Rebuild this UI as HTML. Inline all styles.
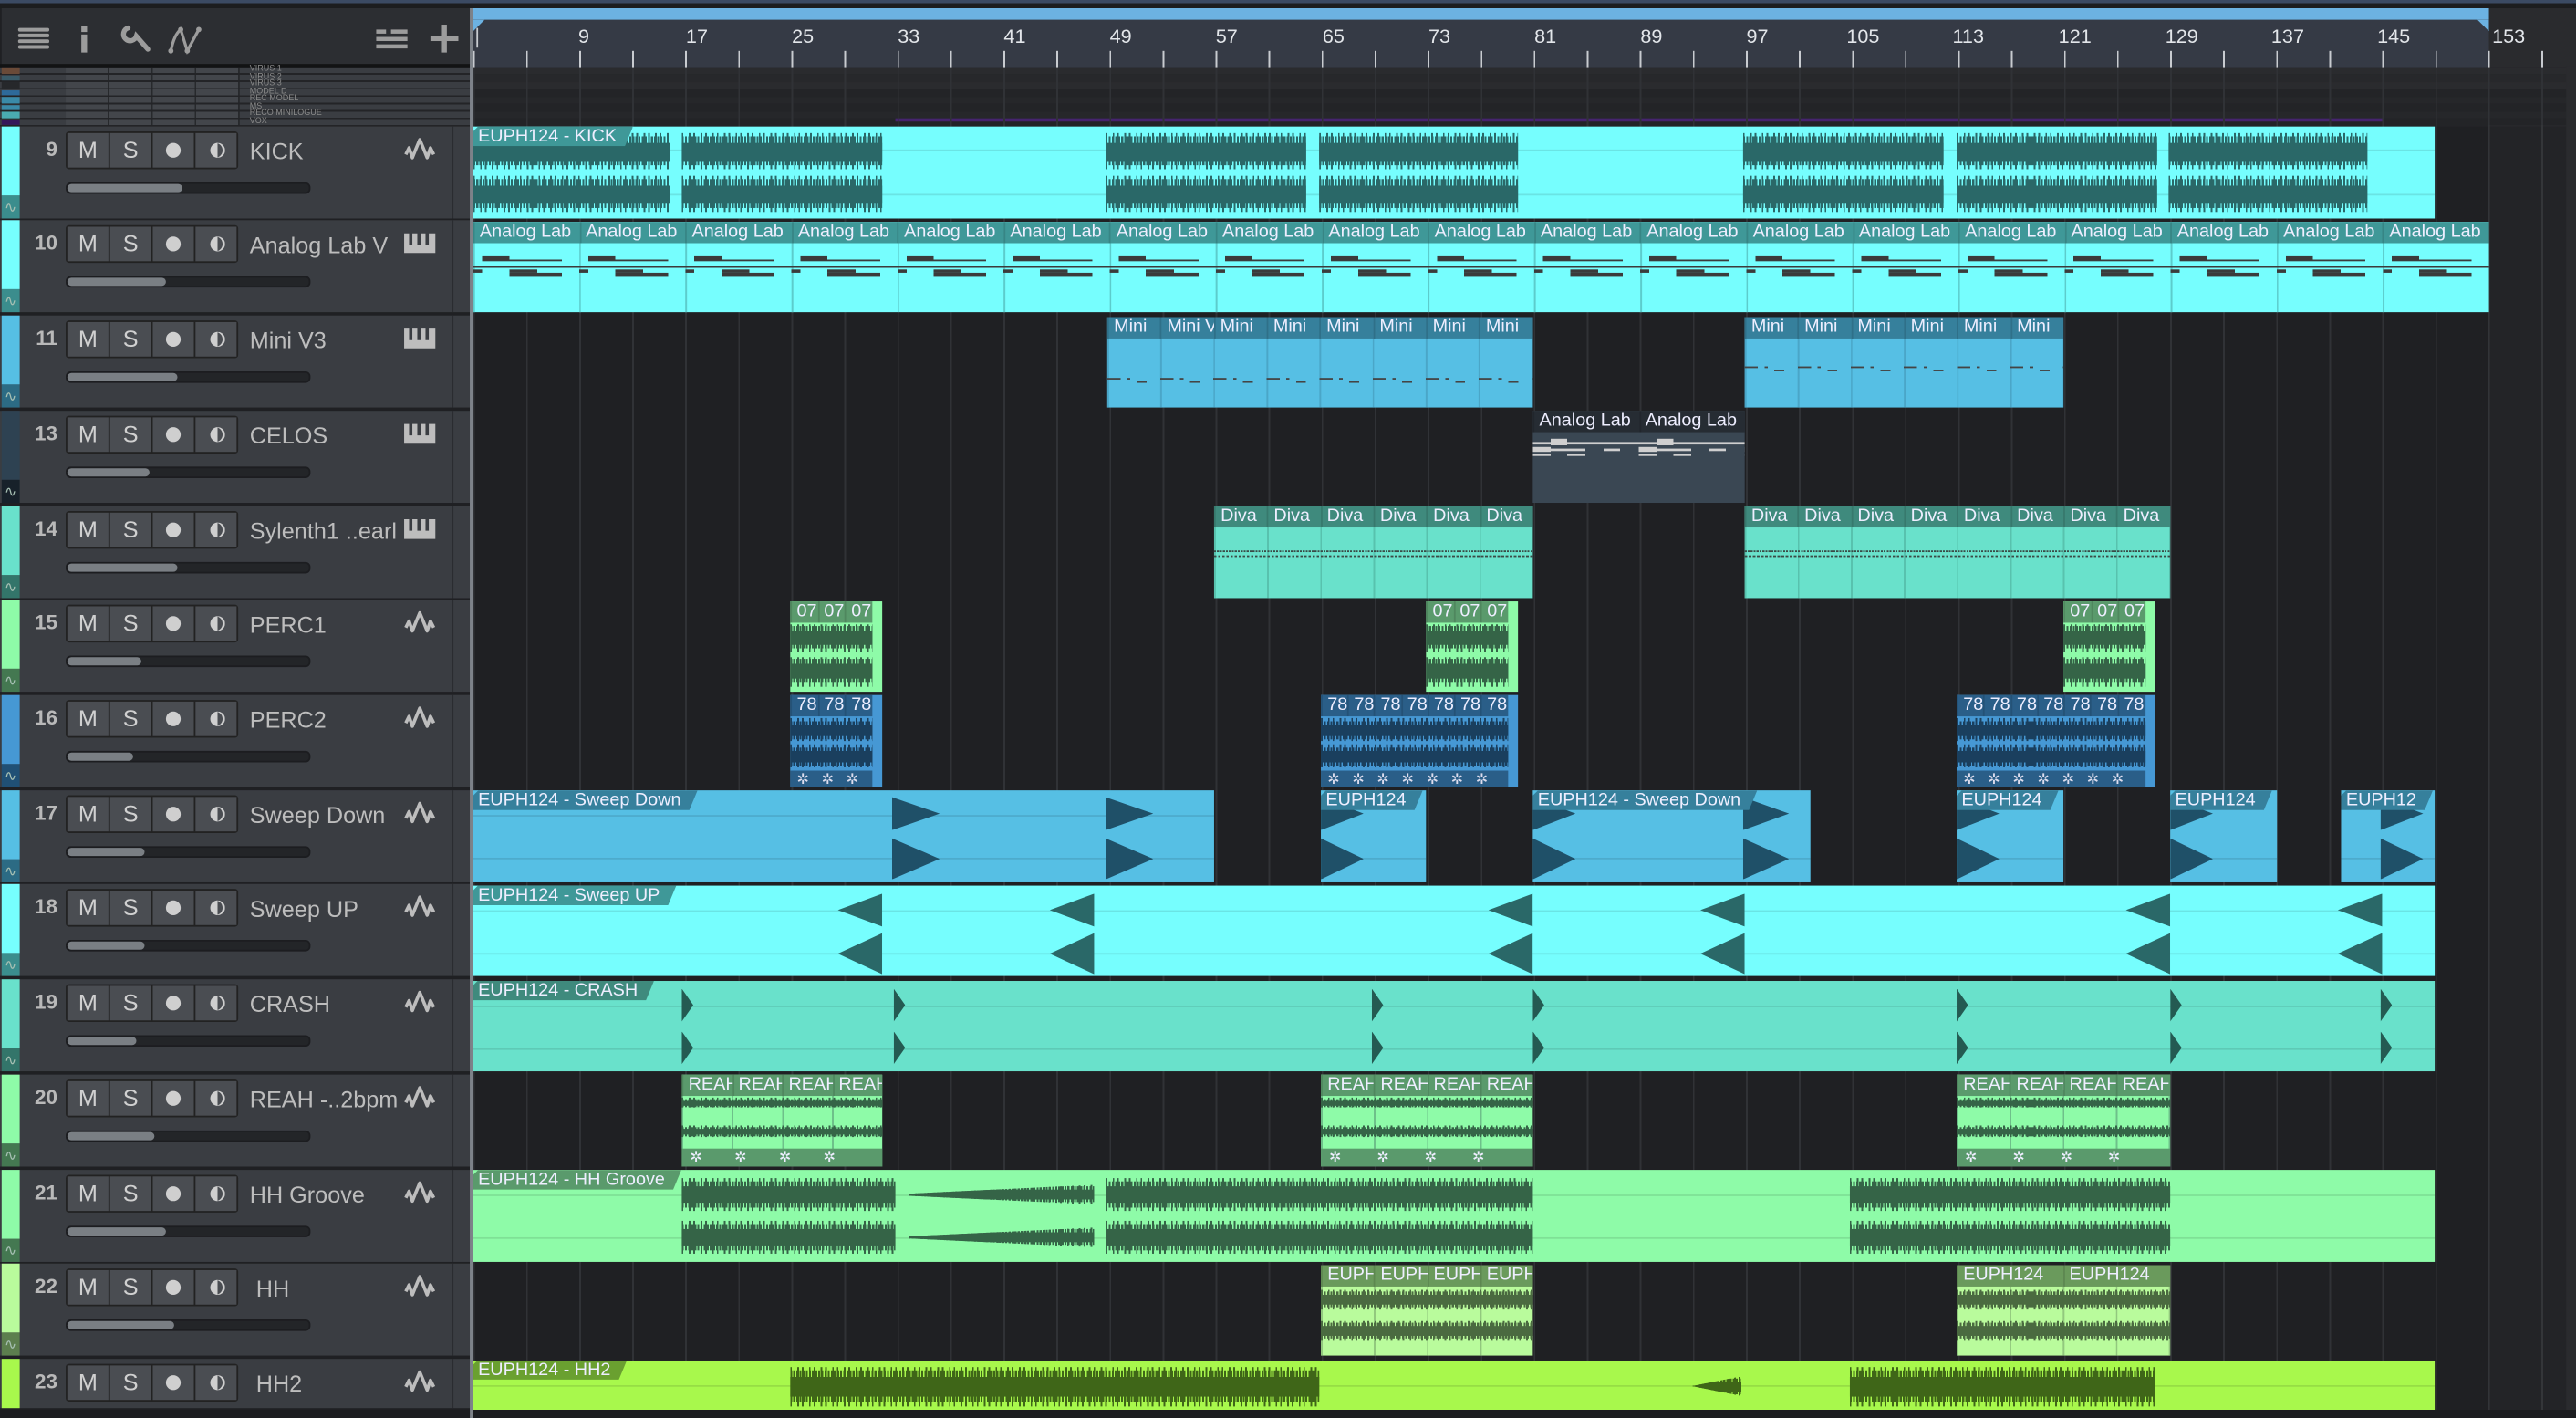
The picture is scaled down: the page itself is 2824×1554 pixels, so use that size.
<!DOCTYPE html>
<html><head><meta charset="utf-8">
<style>
html,body{margin:0;padding:0;width:2824px;height:1554px;overflow:hidden;background:#1f2023;}
#s{position:absolute;left:0;top:0;width:1568px;height:863px;transform:scale(1.80102,1.8007);transform-origin:0 0;background:#1f2023;font-family:"Liberation Sans",sans-serif;overflow:hidden}
.a{position:absolute}
.r{position:absolute;left:0;width:1568px;height:57.74px}
.hd{position:absolute;left:0;top:0;width:286px;height:56px;background:#3a3d42}
.dv{position:absolute;left:275px;top:0;width:1px;height:56px;background:#2a2c30}
.st{position:absolute;left:1px;top:0;width:11px;height:42px}
.au{position:absolute;left:1px;top:42px;width:11px;height:14px;color:#dfe;font-size:9px;line-height:14px;text-align:center;filter:brightness(.75)}
.num{position:absolute;left:12px;width:23px;top:7px;text-align:right;font-weight:bold;color:#b9b9b9;font-size:12.5px}
.bt{position:absolute;left:40px;top:3px;width:105px;height:23px;background:#222;border-radius:2px;display:flex;gap:1px;padding:1px;box-sizing:border-box}
.bt b{flex:1;background:#4a4d52;color:#d0d0d0;font-weight:normal;font-size:14px;text-align:center;line-height:21px;position:relative}
.dot{display:block;width:9px;height:9px;border-radius:50%;background:#cfcfcf;position:absolute;left:8px;top:6px}
.mon{display:block;position:absolute;left:8.5px;top:6px;width:9px;height:9px;border-radius:50%;background:linear-gradient(90deg,#cfcfcf 0 50%,transparent 50%);box-shadow:inset -1.5px 0 0 #cfcfcf}
.nm{position:absolute;left:152px;top:7px;color:#bdbdbd;font-size:14px;white-space:nowrap}
.ic{position:absolute;left:246px;top:8px;width:19px;height:12px;overflow:visible}
.fd{position:absolute;left:40px;top:34px;width:147px;height:5px;border-radius:3px;background:#232528;border:1px solid #1c1d20}
.fd i{display:block;height:5px;border-radius:3px;background:#7a7f84}
.c{position:absolute;top:0.5px;height:55.5px;overflow:hidden}
.lb{position:absolute;left:0;top:0;height:12px;color:#eef;font-size:11px;line-height:12px;padding-left:3px;padding-right:10px;white-space:nowrap;clip-path:polygon(3px 0,100% 0,calc(100% - 5px) 100%,0 100%,0 3px)}
.hb{position:absolute;left:0;top:0;right:0;height:13px;display:flex;overflow:hidden}
.hb span{flex:none;height:13px;color:#eef;font-size:11px;line-height:13px;padding-left:3px;box-sizing:border-box;overflow:hidden;white-space:nowrap;border-left:1px solid rgba(0,0,0,.12)}
.wv{position:absolute;background:
 linear-gradient(var(--w),var(--w)) 0 50%/100% 50% no-repeat,
 repeating-linear-gradient(90deg,var(--w) 0 1.2px,transparent 1.2px 1.9px) 0 50%/100% 80% no-repeat,
 repeating-linear-gradient(90deg,var(--w) 0 1px,transparent 1px 4.3px,var(--w) 4.3px 5.3px,transparent 5.3px 7.1px)}
.cl{position:absolute;left:0;right:0;height:1px;background:rgba(0,0,0,.1)}
.tri{position:absolute;background:var(--w)}
.cy{background:#76fefe;--w:#2a6868}.cyh{background:#3f9898}
.bl{background:#56bfe4;--w:#1f5068}.blh{background:#36809c}
.te{background:#69e1cb;--w:#245a52}.teh{background:#3f8a7d}
.gr{background:#8efba8;--w:#356447}.grh{background:#5a9a6c}
.pb{background:#4698d4;--w:#1a3f5e}.pbh{background:#2a5e88}
.lg{background:#b9fb9c;--w:#4a6a40}.lgh{background:#6a9a5c}
.li{background:#a8f84c;--w:#3f6618}.lih{background:#6aa030}
.mr{position:absolute;left:0;width:1568px;height:4.5px}
.tk{position:absolute;top:15px;color:#e3e6ea;font-size:12px}
</style></head><body><div id="s">

<div class="a" style="left:0;top:0;width:1568px;height:2px;background:#3b4a63"></div>
<div class="a" style="left:0;top:2px;width:1568px;height:3px;background:#1c1d1f"></div>
<div class="a" style="left:1px;top:5px;width:285px;height:34px;background:#2c2e32"></div>
<div class="a" style="left:0;top:39px;width:287px;height:2px;background:#121314"></div>
<svg class="a" style="left:0;top:5px" width="286" height="34" viewBox="0 0 286 34">
 <g fill="#9c9c9c">
  <rect x="11" y="12" width="19" height="2.2" rx="1"/><rect x="11" y="15.5" width="19" height="2.2" rx="1"/><rect x="11" y="19" width="19" height="2.2" rx="1"/><rect x="11" y="22.5" width="19" height="2.2" rx="1"/>
  <rect x="49.5" y="11" width="3.5" height="3.5"/><rect x="49.5" y="16" width="3.5" height="11"/>
  <rect x="238" y="13" width="10" height="2.5"/><rect x="229" y="17.5" width="19" height="2.5"/><rect x="229" y="22" width="19" height="2.5"/><rect x="229" y="13" width="6" height="2.5"/>
  <rect x="262" y="17" width="17" height="3"/><rect x="269" y="10" width="3" height="17"/>
 </g>
 <path d="M78 12 a4 4 0 1 0 5 5 L90 25" stroke="#9c9c9c" stroke-width="3" fill="none" stroke-linecap="round"/>
 <path d="M104 26 Q106 16 110 13 L114 26 L121 13" stroke="#9c9c9c" stroke-width="1.8" fill="none"/>
 <circle cx="104" cy="26" r="1.6" fill="#9c9c9c"/><circle cx="110" cy="13" r="1.6" fill="#9c9c9c"/><circle cx="114" cy="26" r="1.6" fill="#9c9c9c"/><circle cx="121" cy="13" r="1.6" fill="#9c9c9c"/>
</svg>
<div class="a" style="left:287px;top:5px;width:1281px;height:36px;background:#2a2b2e"></div>
<div class="a" style="left:288px;top:5px;width:1227px;height:36px;background:#353a45"></div>
<div class="a" style="left:288px;top:5px;width:1227px;height:7px;background:#6cb2e2"></div>
<div class="a" style="left:288px;top:12px;width:7px;height:7px;background:#6cb2e2;clip-path:polygon(0 0,100% 0,0 100%)"></div>
<div class="a" style="left:1508px;top:12px;width:7px;height:7px;background:#6cb2e2;clip-path:polygon(0 0,100% 0,100% 100%)"></div>
<div class="a" style="left:288px;top:31px;width:1293px;height:9.5px;background:repeating-linear-gradient(90deg,#c8cbd0 0 1px,transparent 1px 32.28px)"></div>
<div class="a" style="left:290px;top:17px;width:1px;height:12px;background:#c8cbd0"></div>
<div class="tk" style="left:352px">9</div><div class="tk" style="left:417.5px">17</div><div class="tk" style="left:482px">25</div><div class="tk" style="left:546.5px">33</div><div class="tk" style="left:611px">41</div><div class="tk" style="left:675.5px">49</div><div class="tk" style="left:740px">57</div><div class="tk" style="left:805px">65</div><div class="tk" style="left:869.5px">73</div><div class="tk" style="left:934px">81</div><div class="tk" style="left:998.5px">89</div><div class="tk" style="left:1063px">97</div><div class="tk" style="left:1124px">105</div><div class="tk" style="left:1188.5px">113</div><div class="tk" style="left:1253px">121</div><div class="tk" style="left:1318px">129</div><div class="tk" style="left:1382.5px">137</div><div class="tk" style="left:1447px">145</div><div class="tk" style="left:1517px">153</div>

<div class="a" style="left:0;top:40.5px;width:1568px;height:36px;background:#242528"></div>
<div class="mr" style="top:40.5px;background:#2a2b2e"></div><div class="mr" style="top:45px;background:#27282b"></div><div class="mr" style="top:49.5px;background:#2a2b2e"></div><div class="mr" style="top:54px;background:#232427"></div><div class="mr" style="top:58.5px;background:#26272a"></div><div class="mr" style="top:63px;background:#232427"></div><div class="mr" style="top:67.5px;background:#26272a"></div><div class="mr" style="top:72px;background:#232427"></div>
<div class="a" style="left:0;top:40.5px;width:286px;height:36px;background:repeating-linear-gradient(180deg,#3a3d42 0 3.5px,#232427 3.5px 4.5px)"></div>
<div class="a" style="left:40px;top:40.5px;width:106px;height:36px;background:repeating-linear-gradient(90deg,#45484d 0 25.5px,#25272a 25.5px 26.5px);opacity:.9;-webkit-mask:repeating-linear-gradient(180deg,#000 0 3.5px,transparent 3.5px 4.5px)"></div>
<div class="a" style="left:1px;top:41px;width:11px;height:3.5px;background:#6a4a38"></div><div class="a" style="left:1px;top:45.5px;width:11px;height:3.5px;background:#3a5a68"></div><div class="a" style="left:1px;top:50px;width:11px;height:3.5px;background:#26282b"></div><div class="a" style="left:1px;top:54.5px;width:11px;height:3.5px;background:#2e6a9a"></div><div class="a" style="left:1px;top:59px;width:11px;height:3.5px;background:#3a8aa8"></div><div class="a" style="left:1px;top:63.5px;width:11px;height:3.5px;background:#3a8aa8"></div><div class="a" style="left:1px;top:68px;width:11px;height:3.5px;background:#4aabb0"></div><div class="a" style="left:1px;top:72.5px;width:11px;height:3.5px;background:#35185a"></div>
<div class="a" style="left:152px;top:40px;color:#8a8a8a;font-size:5px;line-height:4.5px">VIRUS 1<br>VIRUS 2<br>VIRUS 3<br>MODEL D<br>REC MODEL<br>MS<br>RECO MINILOGUE<br>VOX</div>
<div class="a" style="left:545px;top:71.5px;width:906px;height:2.5px;background:#45246e"></div>

<div class="a" style="left:288px;top:40.5px;width:1275px;height:823px;background:repeating-linear-gradient(90deg,#303236 0 1px,transparent 1px 32.28px)"></div>
<div class="a" style="left:1515px;top:76px;width:48px;height:787px;background:rgba(255,255,255,.02)"></div>
<div class="a" style="left:1562px;top:40px;width:6px;height:823px;background:#2a2b2e"></div>
<div class="a" style="left:286px;top:5px;width:2px;height:858px;background:#7d8289"></div>

<!-- ROW 9 KICK -->
<div class="r" style="top:76.5px">
 <div class="hd"></div><div class="dv"></div>
 <div class="st" style="background:#76fefe"></div><div class="au" style="background:#4fbcbc">∿</div>
 <div class="num">9</div>
 <div class="bt"><b>M</b><b>S</b><b><i class="dot"></i></b><b><i class="mon"></i></b></div>
 <div class="nm">KICK</div><svg class="ic" viewBox="0 0 19 12"><path d="M1 9 L3 5 L5 11 L7 6 L9.5 0 L12 6 L14 11 L16 5 L18 9" stroke="#bdbdbd" stroke-width="2" fill="none" stroke-linejoin="round"/></svg>
 <div class="fd"><i style="width:70px"></i></div>
 <div class="c cy" style="left:288px;width:1194px">
  <div class="cl" style="top:14px"></div><div class="cl" style="top:41px"></div>
  <div class="wv" style="left:0;width:120px;top:4px;height:22px"></div><div class="wv" style="left:0;width:120px;top:30px;height:22px"></div>
  <div class="wv" style="left:127px;width:122px;top:4px;height:22px"></div><div class="wv" style="left:127px;width:122px;top:30px;height:22px"></div>
  <div class="wv" style="left:385px;width:122px;top:4px;height:22px"></div><div class="wv" style="left:385px;width:122px;top:30px;height:22px"></div>
  <div class="wv" style="left:515px;width:121px;top:4px;height:22px"></div><div class="wv" style="left:515px;width:121px;top:30px;height:22px"></div>
  <div class="wv" style="left:773px;width:122px;top:4px;height:22px"></div><div class="wv" style="left:773px;width:122px;top:30px;height:22px"></div>
  <div class="wv" style="left:903px;width:122px;top:4px;height:22px"></div><div class="wv" style="left:903px;width:122px;top:30px;height:22px"></div>
  <div class="wv" style="left:1032px;width:121px;top:4px;height:22px"></div><div class="wv" style="left:1032px;width:121px;top:30px;height:22px"></div>
  <div class="lb cyh">EUPH124 - KICK</div>
 </div>
</div>

<!-- ROW 10 -->
<div class="r" style="top:134.2px">
 <div class="hd"></div><div class="dv"></div>
 <div class="st" style="background:#76fefe"></div><div class="au" style="background:#4fbcbc">∿</div>
 <div class="num">10</div>
 <div class="bt"><b>M</b><b>S</b><b><i class="dot"></i></b><b><i class="mon"></i></b></div>
 <div class="nm">Analog Lab V</div><svg class="ic" viewBox="0 0 19 12"><path d="M0 0 H3 V7 H5 V0 H8 V7 H10 V0 H13 V7 H15 V0 H19 V12 H0Z" fill="#bdbdbd"/></svg>
 <div class="fd"><i style="width:60px"></i></div>
 <div class="c cy" style="left:288px;width:1227px;background:repeating-linear-gradient(90deg,#5ccccc 0 1px,transparent 1px 64.58px),#76fefe">
  <div class="a" style="left:0;right:0;top:21px;height:14px;background:
   repeating-linear-gradient(90deg,transparent 0 5.5px,#3b3b3b 5.5px 22px,transparent 22px 64.58px) 0 0/100% 3px no-repeat,
   repeating-linear-gradient(90deg,transparent 0 22px,#3b3b3b 22px 54px,transparent 54px 64.58px) 0 2.5px/100% 1px no-repeat,
   linear-gradient(#3b3b3b,#3b3b3b) 0 6px/100% 1px no-repeat,
   repeating-linear-gradient(90deg,#3b3b3b 0 5.5px,transparent 5.5px 22px,#3b3b3b 22px 39px,transparent 39px 64.58px) 0 8px/100% 2px no-repeat,
   repeating-linear-gradient(90deg,transparent 0 22px,#3b3b3b 22px 54px,transparent 54px 64.58px) 0 10px/100% 2.5px no-repeat"></div>
  <div class="hb cyh"><span style="width:64.58px">Analog Lab</span><span style="width:64.58px">Analog Lab</span><span style="width:64.58px">Analog Lab</span><span style="width:64.58px">Analog Lab</span><span style="width:64.58px">Analog Lab</span><span style="width:64.58px">Analog Lab</span><span style="width:64.58px">Analog Lab</span><span style="width:64.58px">Analog Lab</span><span style="width:64.58px">Analog Lab</span><span style="width:64.58px">Analog Lab</span><span style="width:64.58px">Analog Lab</span><span style="width:64.58px">Analog Lab</span><span style="width:64.58px">Analog Lab</span><span style="width:64.58px">Analog Lab</span><span style="width:64.58px">Analog Lab</span><span style="width:64.58px">Analog Lab</span><span style="width:64.58px">Analog Lab</span><span style="width:64.58px">Analog Lab</span><span style="width:64.58px">Analog Lab</span></div>
 </div>
</div>

<!-- ROW 11 -->
<div class="r" style="top:192px">
 <div class="hd"></div><div class="dv"></div>
 <div class="st" style="background:#56bfe4"></div><div class="au" style="background:#3a8fb0">∿</div>
 <div class="num">11</div>
 <div class="bt"><b>M</b><b>S</b><b><i class="dot"></i></b><b><i class="mon"></i></b></div>
 <div class="nm">Mini V3</div><svg class="ic" viewBox="0 0 19 12"><path d="M0 0 H3 V7 H5 V0 H8 V7 H10 V0 H13 V7 H15 V0 H19 V12 H0Z" fill="#bdbdbd"/></svg>
 <div class="fd"><i style="width:67px"></i></div>
 <div class="c bl" style="left:674px;width:259px;background:repeating-linear-gradient(90deg,#4aa6c8 0 1px,transparent 1px 32.3px),#56bfe4">
  <div class="a" style="left:0;right:0;top:37px;height:3px;background:repeating-linear-gradient(90deg,#444 0 8px,transparent 8px 12px,#444 12px 14px,transparent 14px 32.3px) 0 0/100% 1px no-repeat,repeating-linear-gradient(90deg,transparent 0 18px,#444 18px 24px,transparent 24px 32.3px) 0 2px/100% 1px no-repeat"></div>
  <div class="hb blh"><span style="width:32.35px">Mini</span><span style="width:32.35px">Mini V</span><span style="width:32.35px">Mini</span><span style="width:32.35px">Mini</span><span style="width:32.35px">Mini</span><span style="width:32.35px">Mini</span><span style="width:32.35px">Mini</span><span style="width:32.35px">Mini</span></div>
 </div>
 <div class="c bl" style="left:1062px;width:194px;background:repeating-linear-gradient(90deg,#4aa6c8 0 1px,transparent 1px 32.3px),#56bfe4">
  <div class="a" style="left:0;right:0;top:30px;height:3px;background:repeating-linear-gradient(90deg,#444 0 8px,transparent 8px 12px,#444 12px 14px,transparent 14px 32.3px) 0 0/100% 1px no-repeat,repeating-linear-gradient(90deg,transparent 0 18px,#444 18px 24px,transparent 24px 32.3px) 0 2px/100% 1px no-repeat"></div>
  <div class="hb blh"><span style="width:32.35px">Mini</span><span style="width:32.35px">Mini</span><span style="width:32.35px">Mini</span><span style="width:32.35px">Mini</span><span style="width:32.35px">Mini</span><span style="width:32.35px">Mini</span></div>
 </div>
</div>

<!-- ROW 13 -->
<div class="r" style="top:249.7px">
 <div class="hd"></div><div class="dv"></div>
 <div class="st" style="background:#2e4252"></div><div class="au" style="background:#1e2c38">∿</div>
 <div class="num">13</div>
 <div class="bt"><b>M</b><b>S</b><b><i class="dot"></i></b><b><i class="mon"></i></b></div>
 <div class="nm">CELOS</div><svg class="ic" viewBox="0 0 19 12"><path d="M0 0 H3 V7 H5 V0 H8 V7 H10 V0 H13 V7 H15 V0 H19 V12 H0Z" fill="#bdbdbd"/></svg>
 <div class="fd"><i style="width:50px"></i></div>
 <div class="c" style="left:933px;width:129px;background:#3a4753">
  <div class="a" style="left:0;right:0;top:17px;height:12px;background:
   repeating-linear-gradient(90deg,transparent 0 11px,#cfcfcf 11px 21px,transparent 21px 64.5px) 0 0/100% 4px no-repeat,
   linear-gradient(#cfcfcf,#cfcfcf) 0 2px/100% 1.5px no-repeat,
   repeating-linear-gradient(90deg,#cfcfcf 0 11px,transparent 11px 64.5px) 0 5px/100% 3px no-repeat,
   repeating-linear-gradient(90deg,transparent 0 11px,#cfcfcf 11px 32px,transparent 32px 43px,#cfcfcf 43px 53px,transparent 53px 64.5px) 0 6px/100% 1.5px no-repeat,
   repeating-linear-gradient(90deg,#cfcfcf 0 11px,transparent 11px 21px,#cfcfcf 21px 32px,transparent 32px 64.5px) 0 9px/100% 1.5px no-repeat"></div>
  <div class="hb" style="background:#262c33"><span style="width:64.5px">Analog Lab</span><span style="width:64.5px">Analog Lab</span></div>
 </div>
</div>

<!-- ROW 14 -->
<div class="r" style="top:307.5px">
 <div class="hd"></div><div class="dv"></div>
 <div class="st" style="background:#69e1cb"></div><div class="au" style="background:#449c8e">∿</div>
 <div class="num">14</div>
 <div class="bt"><b>M</b><b>S</b><b><i class="dot"></i></b><b><i class="mon"></i></b></div>
 <div class="nm">Sylenth1 ..earl</div><svg class="ic" viewBox="0 0 19 12"><path d="M0 0 H3 V7 H5 V0 H8 V7 H10 V0 H13 V7 H15 V0 H19 V12 H0Z" fill="#bdbdbd"/></svg>
 <div class="fd"><i style="width:67px"></i></div>
 <div class="c te" style="left:739px;width:194px;background:repeating-linear-gradient(90deg,#58c2ae 0 1px,transparent 1px 32.3px),#69e1cb">
  <div class="a" style="left:0;right:0;top:27px;height:4px;background:repeating-linear-gradient(90deg,#3a4a46 0 1.2px,transparent 1.2px 1.8px) 0 0/100% 1.2px no-repeat,repeating-linear-gradient(90deg,#3a4a46 0 1.5px,transparent 1.5px 2.5px) 0 3px/100% 1px no-repeat"></div>
  <div class="hb teh"><span style="width:32.35px">Diva</span><span style="width:32.35px">Diva</span><span style="width:32.35px">Diva</span><span style="width:32.35px">Diva</span><span style="width:32.35px">Diva</span><span style="width:32.35px">Diva</span></div>
 </div>
 <div class="c te" style="left:1062px;width:259px;background:repeating-linear-gradient(90deg,#58c2ae 0 1px,transparent 1px 32.3px),#69e1cb">
  <div class="a" style="left:0;right:0;top:27px;height:4px;background:repeating-linear-gradient(90deg,#3a4a46 0 1.2px,transparent 1.2px 1.8px) 0 0/100% 1.2px no-repeat,repeating-linear-gradient(90deg,#3a4a46 0 1.5px,transparent 1.5px 2.5px) 0 3px/100% 1px no-repeat"></div>
  <div class="hb teh"><span style="width:32.35px">Diva</span><span style="width:32.35px">Diva</span><span style="width:32.35px">Diva</span><span style="width:32.35px">Diva</span><span style="width:32.35px">Diva</span><span style="width:32.35px">Diva</span><span style="width:32.35px">Diva</span><span style="width:32.35px">Diva</span></div>
 </div>
</div>

<!-- ROW 15 -->
<div class="r" style="top:365.2px">
 <div class="hd"></div><div class="dv"></div>
 <div class="st" style="background:#8efba8"></div><div class="au" style="background:#5aa06c">∿</div>
 <div class="num">15</div>
 <div class="bt"><b>M</b><b>S</b><b><i class="dot"></i></b><b><i class="mon"></i></b></div>
 <div class="nm">PERC1</div><svg class="ic" viewBox="0 0 19 12"><path d="M1 9 L3 5 L5 11 L7 6 L9.5 0 L12 6 L14 11 L16 5 L18 9" stroke="#bdbdbd" stroke-width="2" fill="none" stroke-linejoin="round"/></svg>
 <div class="fd"><i style="width:45px"></i></div>
 <div class="c gr" style="left:481px;width:56px"><div class="wv" style="left:0;width:50px;top:14px;height:17px"></div><div class="wv" style="left:0;width:50px;top:34px;height:18px"></div><div class="hb grh" style="right:6px"><span style="width:16.6px">07</span><span style="width:16.6px">07</span><span style="width:16.6px">07</span></div></div>
 <div class="c gr" style="left:868px;width:56px"><div class="wv" style="left:0;width:50px;top:14px;height:17px"></div><div class="wv" style="left:0;width:50px;top:34px;height:18px"></div><div class="hb grh" style="right:6px"><span style="width:16.6px">07</span><span style="width:16.6px">07</span><span style="width:16.6px">07</span></div></div>
 <div class="c gr" style="left:1256px;width:56px"><div class="wv" style="left:0;width:50px;top:14px;height:17px"></div><div class="wv" style="left:0;width:50px;top:34px;height:18px"></div><div class="hb grh" style="right:6px"><span style="width:16.6px">07</span><span style="width:16.6px">07</span><span style="width:16.6px">07</span></div></div>
</div>

<!-- ROW 16 -->
<div class="r" style="top:422.9px">
 <div class="hd"></div><div class="dv"></div>
 <div class="st" style="background:#4698d4"></div><div class="au" style="background:#2a6a9c">∿</div>
 <div class="num">16</div>
 <div class="bt"><b>M</b><b>S</b><b><i class="dot"></i></b><b><i class="mon"></i></b></div>
 <div class="nm">PERC2</div><svg class="ic" viewBox="0 0 19 12"><path d="M1 9 L3 5 L5 11 L7 6 L9.5 0 L12 6 L14 11 L16 5 L18 9" stroke="#bdbdbd" stroke-width="2" fill="none" stroke-linejoin="round"/></svg>
 <div class="fd"><i style="width:40px"></i></div>
 <div class="c pb" style="left:481px;width:56px"><div class="wv" style="left:0;width:50px;top:14px;height:14px"></div><div class="wv" style="left:0;width:50px;top:30px;height:14px"></div><div class="hb pbh" style="right:6px"><span style="width:16.6px">78</span><span style="width:16.6px">78</span><span style="width:16.6px">78</span></div><div class="a pbh" style="left:0;right:6px;bottom:0;height:10px;color:#dde;font-size:9px;line-height:10px;word-spacing:5px;padding-left:4px">✲ ✲ ✲</div></div>
 <div class="c pb" style="left:804px;width:120px"><div class="wv" style="left:0;width:114px;top:14px;height:14px"></div><div class="wv" style="left:0;width:114px;top:30px;height:14px"></div><div class="hb pbh" style="right:6px"><span style="width:16.2px">78</span><span style="width:16.2px">78</span><span style="width:16.2px">78</span><span style="width:16.2px">78</span><span style="width:16.2px">78</span><span style="width:16.2px">78</span><span style="width:16.2px">78</span></div><div class="a pbh" style="left:0;right:6px;bottom:0;height:10px;color:#dde;font-size:9px;line-height:10px;word-spacing:5px;padding-left:4px">✲ ✲ ✲ ✲ ✲ ✲ ✲</div></div>
 <div class="c pb" style="left:1191px;width:121px"><div class="wv" style="left:0;width:115px;top:14px;height:14px"></div><div class="wv" style="left:0;width:115px;top:30px;height:14px"></div><div class="hb pbh" style="right:6px"><span style="width:16.3px">78</span><span style="width:16.3px">78</span><span style="width:16.3px">78</span><span style="width:16.3px">78</span><span style="width:16.3px">78</span><span style="width:16.3px">78</span><span style="width:16.3px">78</span></div><div class="a pbh" style="left:0;right:6px;bottom:0;height:10px;color:#dde;font-size:9px;line-height:10px;word-spacing:5px;padding-left:4px">✲ ✲ ✲ ✲ ✲ ✲ ✲</div></div>
</div>

<!-- ROW 17 -->
<div class="r" style="top:480.7px">
 <div class="hd"></div><div class="dv"></div>
 <div class="st" style="background:#56bfe4"></div><div class="au" style="background:#3a8fb0">∿</div>
 <div class="num">17</div>
 <div class="bt"><b>M</b><b>S</b><b><i class="dot"></i></b><b><i class="mon"></i></b></div>
 <div class="nm">Sweep Down</div><svg class="ic" viewBox="0 0 19 12"><path d="M1 9 L3 5 L5 11 L7 6 L9.5 0 L12 6 L14 11 L16 5 L18 9" stroke="#bdbdbd" stroke-width="2" fill="none" stroke-linejoin="round"/></svg>
 <div class="fd"><i style="width:47px"></i></div>
 <div class="c bl" style="left:288px;width:451px"><div class="cl" style="top:15px"></div><div class="cl" style="top:41px"></div>
  <div class="tri" style="left:255px;top:4px;width:29px;height:20px;clip-path:polygon(0 0,100% 50%,0 100%)"></div><div class="tri" style="left:255px;top:29px;width:29px;height:25px;clip-path:polygon(0 0,100% 50%,0 100%)"></div>
  <div class="tri" style="left:385px;top:4px;width:29px;height:20px;clip-path:polygon(0 0,100% 50%,0 100%)"></div><div class="tri" style="left:385px;top:29px;width:29px;height:25px;clip-path:polygon(0 0,100% 50%,0 100%)"></div>
  <div class="lb blh">EUPH124 - Sweep Down</div></div>
 <div class="c bl" style="left:804px;width:64px"><div class="cl" style="top:41px"></div>
  <div class="tri" style="left:0;top:4px;width:26px;height:20px;clip-path:polygon(0 0,100% 50%,0 100%)"></div><div class="tri" style="left:0;top:29px;width:26px;height:25px;clip-path:polygon(0 0,100% 50%,0 100%)"></div>
  <div class="lb blh">EUPH124</div></div>
 <div class="c bl" style="left:933px;width:169px"><div class="cl" style="top:41px"></div>
  <div class="tri" style="left:0;top:4px;width:26px;height:20px;clip-path:polygon(0 0,100% 50%,0 100%)"></div><div class="tri" style="left:0;top:29px;width:26px;height:25px;clip-path:polygon(0 0,100% 50%,0 100%)"></div>
  <div class="tri" style="left:128px;top:4px;width:28px;height:20px;clip-path:polygon(0 0,100% 50%,0 100%)"></div><div class="tri" style="left:128px;top:29px;width:28px;height:25px;clip-path:polygon(0 0,100% 50%,0 100%)"></div>
  <div class="lb blh">EUPH124 - Sweep Down</div></div>
 <div class="c bl" style="left:1191px;width:65px"><div class="cl" style="top:41px"></div>
  <div class="tri" style="left:0;top:4px;width:26px;height:20px;clip-path:polygon(0 0,100% 50%,0 100%)"></div><div class="tri" style="left:0;top:29px;width:26px;height:25px;clip-path:polygon(0 0,100% 50%,0 100%)"></div>
  <div class="lb blh">EUPH124</div></div>
 <div class="c bl" style="left:1321px;width:65px"><div class="cl" style="top:41px"></div>
  <div class="tri" style="left:0;top:4px;width:26px;height:20px;clip-path:polygon(0 0,100% 50%,0 100%)"></div><div class="tri" style="left:0;top:29px;width:26px;height:25px;clip-path:polygon(0 0,100% 50%,0 100%)"></div>
  <div class="lb blh">EUPH124</div></div>
 <div class="c bl" style="left:1425px;width:57px"><div class="cl" style="top:41px"></div>
  <div class="tri" style="left:24px;top:4px;width:26px;height:20px;clip-path:polygon(0 0,100% 50%,0 100%)"></div><div class="tri" style="left:24px;top:29px;width:26px;height:25px;clip-path:polygon(0 0,100% 50%,0 100%)"></div>
  <div class="lb blh">EUPH12</div></div>
</div>

<!-- ROW 18 -->
<div class="r" style="top:538.4px">
 <div class="hd"></div><div class="dv"></div>
 <div class="st" style="background:#76fefe"></div><div class="au" style="background:#4fbcbc">∿</div>
 <div class="num">18</div>
 <div class="bt"><b>M</b><b>S</b><b><i class="dot"></i></b><b><i class="mon"></i></b></div>
 <div class="nm">Sweep UP</div><svg class="ic" viewBox="0 0 19 12"><path d="M1 9 L3 5 L5 11 L7 6 L9.5 0 L12 6 L14 11 L16 5 L18 9" stroke="#bdbdbd" stroke-width="2" fill="none" stroke-linejoin="round"/></svg>
 <div class="fd"><i style="width:47px"></i></div>
 <div class="c cy" style="left:288px;width:1194px"><div class="cl" style="top:15px"></div><div class="cl" style="top:41px"></div>
  <div class="tri" style="left:222px;top:5px;width:27px;height:20px;clip-path:polygon(0 50%,100% 0,100% 100%)"></div><div class="tri" style="left:222px;top:29px;width:27px;height:25px;clip-path:polygon(0 50%,100% 0,100% 100%)"></div>
  <div class="tri" style="left:351px;top:5px;width:27px;height:20px;clip-path:polygon(0 50%,100% 0,100% 100%)"></div><div class="tri" style="left:351px;top:29px;width:27px;height:25px;clip-path:polygon(0 50%,100% 0,100% 100%)"></div>
  <div class="tri" style="left:618px;top:5px;width:27px;height:20px;clip-path:polygon(0 50%,100% 0,100% 100%)"></div><div class="tri" style="left:618px;top:29px;width:27px;height:25px;clip-path:polygon(0 50%,100% 0,100% 100%)"></div>
  <div class="tri" style="left:747px;top:5px;width:27px;height:20px;clip-path:polygon(0 50%,100% 0,100% 100%)"></div><div class="tri" style="left:747px;top:29px;width:27px;height:25px;clip-path:polygon(0 50%,100% 0,100% 100%)"></div>
  <div class="tri" style="left:1006px;top:5px;width:27px;height:20px;clip-path:polygon(0 50%,100% 0,100% 100%)"></div><div class="tri" style="left:1006px;top:29px;width:27px;height:25px;clip-path:polygon(0 50%,100% 0,100% 100%)"></div>
  <div class="tri" style="left:1135px;top:5px;width:27px;height:20px;clip-path:polygon(0 50%,100% 0,100% 100%)"></div><div class="tri" style="left:1135px;top:29px;width:27px;height:25px;clip-path:polygon(0 50%,100% 0,100% 100%)"></div>
  <div class="lb cyh">EUPH124 - Sweep UP</div></div>
</div>

<!-- ROW 19 -->
<div class="r" style="top:596.2px">
 <div class="hd"></div><div class="dv"></div>
 <div class="st" style="background:#69e1cb"></div><div class="au" style="background:#449c8e">∿</div>
 <div class="num">19</div>
 <div class="bt"><b>M</b><b>S</b><b><i class="dot"></i></b><b><i class="mon"></i></b></div>
 <div class="nm">CRASH</div><svg class="ic" viewBox="0 0 19 12"><path d="M1 9 L3 5 L5 11 L7 6 L9.5 0 L12 6 L14 11 L16 5 L18 9" stroke="#bdbdbd" stroke-width="2" fill="none" stroke-linejoin="round"/></svg>
 <div class="fd"><i style="width:42px"></i></div>
 <div class="c te" style="left:288px;width:1194px"><div class="cl" style="top:15px"></div><div class="cl" style="top:41px"></div>
  <div class="tri" style="left:127px;top:5px;width:7px;height:20px;clip-path:polygon(0 0,100% 50%,0 100%)"></div><div class="tri" style="left:127px;top:31px;width:7px;height:20px;clip-path:polygon(0 0,100% 50%,0 100%)"></div>
  <div class="tri" style="left:256px;top:5px;width:7px;height:20px;clip-path:polygon(0 0,100% 50%,0 100%)"></div><div class="tri" style="left:256px;top:31px;width:7px;height:20px;clip-path:polygon(0 0,100% 50%,0 100%)"></div>
  <div class="tri" style="left:547px;top:5px;width:7px;height:20px;clip-path:polygon(0 0,100% 50%,0 100%)"></div><div class="tri" style="left:547px;top:31px;width:7px;height:20px;clip-path:polygon(0 0,100% 50%,0 100%)"></div>
  <div class="tri" style="left:645px;top:5px;width:7px;height:20px;clip-path:polygon(0 0,100% 50%,0 100%)"></div><div class="tri" style="left:645px;top:31px;width:7px;height:20px;clip-path:polygon(0 0,100% 50%,0 100%)"></div>
  <div class="tri" style="left:903px;top:5px;width:7px;height:20px;clip-path:polygon(0 0,100% 50%,0 100%)"></div><div class="tri" style="left:903px;top:31px;width:7px;height:20px;clip-path:polygon(0 0,100% 50%,0 100%)"></div>
  <div class="tri" style="left:1033px;top:5px;width:7px;height:20px;clip-path:polygon(0 0,100% 50%,0 100%)"></div><div class="tri" style="left:1033px;top:31px;width:7px;height:20px;clip-path:polygon(0 0,100% 50%,0 100%)"></div>
  <div class="tri" style="left:1161px;top:5px;width:7px;height:20px;clip-path:polygon(0 0,100% 50%,0 100%)"></div><div class="tri" style="left:1161px;top:31px;width:7px;height:20px;clip-path:polygon(0 0,100% 50%,0 100%)"></div>
  <div class="lb teh">EUPH124 - CRASH</div></div>
</div>

<!-- ROW 20 -->
<div class="r" style="top:653.9px">
 <div class="hd"></div><div class="dv"></div>
 <div class="st" style="background:#8efba8"></div><div class="au" style="background:#5aa06c">∿</div>
 <div class="num">20</div>
 <div class="bt"><b>M</b><b>S</b><b><i class="dot"></i></b><b><i class="mon"></i></b></div>
 <div class="nm">REAH -..2bpm</div><svg class="ic" viewBox="0 0 19 12"><path d="M1 9 L3 5 L5 11 L7 6 L9.5 0 L12 6 L14 11 L16 5 L18 9" stroke="#bdbdbd" stroke-width="2" fill="none" stroke-linejoin="round"/></svg>
 <div class="fd"><i style="width:53px"></i></div>
 <div class="c gr" style="left:415px;width:122px;background:repeating-linear-gradient(90deg,#6ec08a 0 1px,transparent 1px 30.5px),#8efba8"><div class="wv" style="left:0;right:0;top:14px;height:6px"></div><div class="wv" style="left:0;right:0;top:31px;height:7px"></div><div class="hb grh"><span style="width:30.5px">REAH</span><span style="width:30.5px">REAH</span><span style="width:30.5px">REAH</span><span style="width:30.5px">REAH</span></div><div class="a grh" style="left:0;right:0;bottom:0;height:11px;color:#eef;font-size:9px;line-height:11px;word-spacing:17px;padding-left:5px">✲ ✲ ✲ ✲</div></div>
 <div class="c gr" style="left:804px;width:129px;background:repeating-linear-gradient(90deg,#6ec08a 0 1px,transparent 1px 32.3px),#8efba8"><div class="wv" style="left:0;right:0;top:14px;height:6px"></div><div class="wv" style="left:0;right:0;top:31px;height:7px"></div><div class="hb grh"><span style="width:32.3px">REAH</span><span style="width:32.3px">REAH</span><span style="width:32.3px">REAH</span><span style="width:32.3px">REAH</span></div><div class="a grh" style="left:0;right:0;bottom:0;height:11px;color:#eef;font-size:9px;line-height:11px;word-spacing:19px;padding-left:5px">✲ ✲ ✲ ✲</div></div>
 <div class="c gr" style="left:1191px;width:130px;background:repeating-linear-gradient(90deg,#6ec08a 0 1px,transparent 1px 32.3px),#8efba8"><div class="wv" style="left:0;right:0;top:14px;height:6px"></div><div class="wv" style="left:0;right:0;top:31px;height:7px"></div><div class="hb grh"><span style="width:32.3px">REAH</span><span style="width:32.3px">REAH</span><span style="width:32.3px">REAH</span><span style="width:32.3px">REAH</span></div><div class="a grh" style="left:0;right:0;bottom:0;height:11px;color:#eef;font-size:9px;line-height:11px;word-spacing:19px;padding-left:5px">✲ ✲ ✲ ✲</div></div>
</div>

<!-- ROW 21 -->
<div class="r" style="top:711.6px">
 <div class="hd"></div><div class="dv"></div>
 <div class="st" style="background:#8efba8"></div><div class="au" style="background:#5aa06c">∿</div>
 <div class="num">21</div>
 <div class="bt"><b>M</b><b>S</b><b><i class="dot"></i></b><b><i class="mon"></i></b></div>
 <div class="nm">HH Groove</div><svg class="ic" viewBox="0 0 19 12"><path d="M1 9 L3 5 L5 11 L7 6 L9.5 0 L12 6 L14 11 L16 5 L18 9" stroke="#bdbdbd" stroke-width="2" fill="none" stroke-linejoin="round"/></svg>
 <div class="fd"><i style="width:60px"></i></div>
 <div class="c gr" style="left:288px;width:1194px"><div class="cl" style="top:15px"></div><div class="cl" style="top:41px"></div>
  <div class="wv" style="left:127px;width:130px;top:5px;height:20px"></div><div class="wv" style="left:127px;width:130px;top:31px;height:20px"></div>
  <div class="wv" style="left:265px;width:113px;top:9px;height:12px;clip-path:polygon(0 45%,100% 0,100% 100%,0 55%)"></div><div class="wv" style="left:265px;width:113px;top:35px;height:12px;clip-path:polygon(0 45%,100% 0,100% 100%,0 55%)"></div>
  <div class="wv" style="left:385px;width:260px;top:5px;height:20px"></div><div class="wv" style="left:385px;width:260px;top:31px;height:20px"></div>
  <div class="wv" style="left:838px;width:195px;top:5px;height:20px"></div><div class="wv" style="left:838px;width:195px;top:31px;height:20px"></div>
  <div class="lb grh">EUPH124 -  HH Groove</div></div>
</div>

<!-- ROW 22 -->
<div class="r" style="top:769.4px">
 <div class="hd"></div><div class="dv"></div>
 <div class="st" style="background:#b9fb9c"></div><div class="au" style="background:#7aa868">∿</div>
 <div class="num">22</div>
 <div class="bt"><b>M</b><b>S</b><b><i class="dot"></i></b><b><i class="mon"></i></b></div>
 <div class="nm">&nbsp;HH</div><svg class="ic" viewBox="0 0 19 12"><path d="M1 9 L3 5 L5 11 L7 6 L9.5 0 L12 6 L14 11 L16 5 L18 9" stroke="#bdbdbd" stroke-width="2" fill="none" stroke-linejoin="round"/></svg>
 <div class="fd"><i style="width:65px"></i></div>
 <div class="c lg" style="left:804px;width:129px;background:repeating-linear-gradient(90deg,#92c87e 0 1px,transparent 1px 32.3px),#b9fb9c"><div class="wv" style="left:0;right:0;top:15px;height:12px"></div><div class="wv" style="left:0;right:0;top:34px;height:12px"></div><div class="hb lgh"><span style="width:32.3px">EUPH</span><span style="width:32.3px">EUPH</span><span style="width:32.3px">EUPH</span><span style="width:32.3px">EUPH</span></div></div>
 <div class="c lg" style="left:1191px;width:130px;background:repeating-linear-gradient(90deg,#92c87e 0 1px,transparent 1px 32.3px),#b9fb9c"><div class="wv" style="left:0;right:0;top:15px;height:12px"></div><div class="wv" style="left:0;right:0;top:34px;height:12px"></div><div class="hb lgh"><span style="width:64.6px">EUPH124</span><span style="width:64.6px">EUPH124</span></div></div>
</div>

<!-- ROW 23 -->
<div class="r" style="top:827.1px">
 <div class="hd" style="height:30px"></div><div class="dv" style="height:30px"></div>
 <div class="st" style="background:#a8f84c;height:30px"></div>
 <div class="num">23</div>
 <div class="bt"><b>M</b><b>S</b><b><i class="dot"></i></b><b><i class="mon"></i></b></div>
 <div class="nm">&nbsp;HH2</div><svg class="ic" viewBox="0 0 19 12"><path d="M1 9 L3 5 L5 11 L7 6 L9.5 0 L12 6 L14 11 L16 5 L18 9" stroke="#bdbdbd" stroke-width="2" fill="none" stroke-linejoin="round"/></svg>
 <div class="c li" style="left:288px;width:1194px;height:30px"><div class="cl" style="top:15px"></div>
  <div class="wv" style="left:193px;width:322px;top:4px;height:24px"></div>
  <div class="wv" style="left:742px;width:30px;top:10px;height:12px;clip-path:polygon(0 50%,100% 0,100% 100%)"></div>
  <div class="wv" style="left:838px;width:186px;top:4px;height:24px"></div>
  <div class="lb lih">EUPH124 -  HH2</div></div>
</div>
<div class="a" style="left:0;top:858px;width:1568px;height:5px;background:#1c1d20"></div>
<div class="a" style="left:286px;top:5px;width:2px;height:858px;background:#7d8289"></div>

</div></body></html>
